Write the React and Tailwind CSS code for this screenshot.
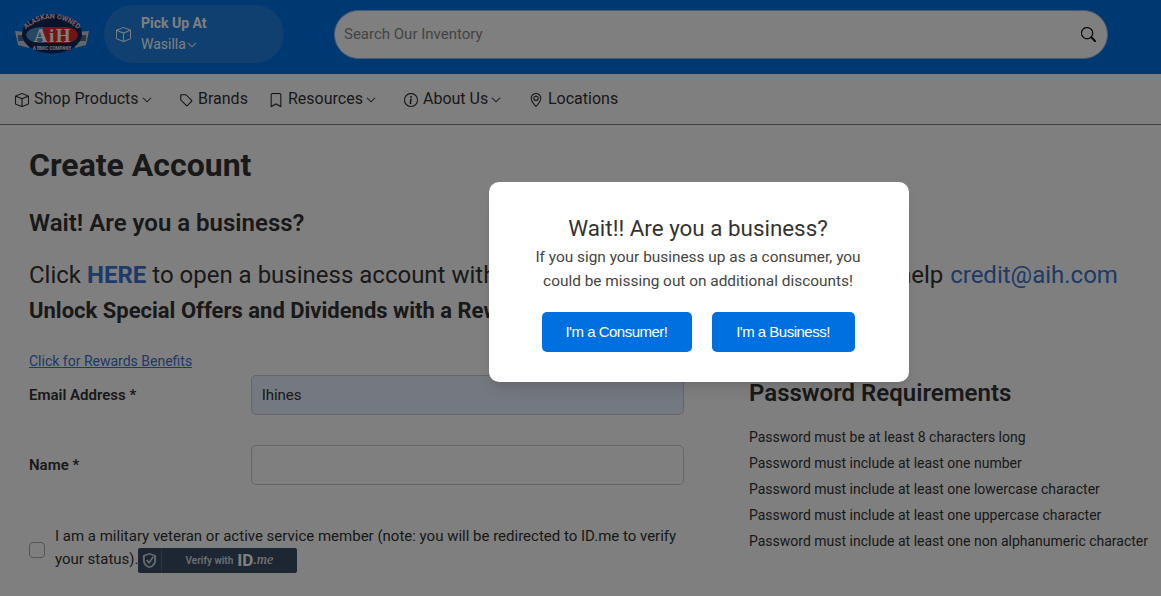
import { BsBox, BsBookmark, BsInfoCircle, BsGeoAlt, BsChevronDown, BsSearch } from "react-icons/bs";

const Logo = () => (
  <svg width="74" height="40" viewBox="0 0 74 40" className="shrink-0">
    <path d="M0 17 L14 18 L14 34 L3 31 Z" fill="#c3cbd8" />
    <path d="M74 17 L60 18 L60 34 L71 31 Z" fill="#c3cbd8" />
    <rect x="3" y="21" width="6" height="6" fill="#5b6b8a" />
    <rect x="65" y="21" width="6" height="6" fill="#5b6b8a" />
    <ellipse cx="37" cy="20" rx="30" ry="19.5" fill="#14265c" />
    <path d="M11 21 C12 15 20 13 28 13 L28 29 C20 29 12 27 11 21 Z" fill="#4a90c8" />
    <path d="M28 13 L50 13 C56 13 62 15 63 21 C62 27 56 29 50 29 L28 29 Z" fill="#e0282f" />
    <text x="38" y="27.5" textAnchor="middle" fontFamily="'Liberation Serif', serif" fontWeight="700" fontSize="19" fill="#fff" letterSpacing="1.5">AiH</text>
    <path id="arcTop" d="M11 15 Q37 -6 63 15" fill="none" />
    <text fontFamily="Roboto, sans-serif" fontWeight="700" fontSize="7" fill="#f3c9d0">
      <textPath href="#arcTop" startOffset="50%" textAnchor="middle">ALASKAN OWNED</textPath>
    </text>
    <text x="37" y="35.5" textAnchor="middle" fontFamily="Roboto, sans-serif" fontWeight="700" fontSize="4.6" fill="#e5e7eb">A BMIC COMPANY</text>
  </svg>
);

const PlainTag = ({ size, className }) => (
  <svg width={size} height={size} viewBox="0 0 16 16" fill="none" stroke="currentColor" strokeWidth="1.2" strokeLinejoin="round" className={className}>
    <path d="M2 2.5 C2 2.2 2.2 2 2.5 2 H8 L14.5 8.5 C14.8 8.8 14.8 9.2 14.5 9.5 L9.5 14.5 C9.2 14.8 8.8 14.8 8.5 14.5 L2 8 Z" />
  </svg>
);

const NavItem = ({ icon: Icon, label, caret, className }) => (
  <a className={`flex items-center text-[16px] text-[#333] ${className}`}>
    <Icon size={14} strokeWidth={0.2} className="ml-[1px] mr-[5px] mt-[2px] text-[#222]" />
    <span>{label}</span>
    {caret && <BsChevronDown size={10} strokeWidth={0.8} className="ml-[3px] mt-[2px]" />}
  </a>
);

const Requirement = ({ children }) => <li className="h-[26px] leading-[26px]">{children}</li>;

const App = () => {
  return (
    <div className="relative h-[596px] w-[1161px] overflow-hidden bg-white font-['Roboto',sans-serif] text-[#333]">
      <header className="flex h-[74px] items-center bg-[#0072e4] pb-[6px] pl-[15px]">
        <Logo />
        <div className="ml-[15px] flex h-[58px] w-[180px] items-center rounded-full bg-[#2080e0] pl-[12px] text-white">
          <BsBox size={15} />
          <div className="ml-[10px] text-[14px] leading-[21px]">
            <div className="font-bold">Pick Up At</div>
            <div className="flex items-center">
              Wasilla
              <BsChevronDown size={10} strokeWidth={0.8} className="ml-[1px]" />
            </div>
          </div>
        </div>
        <div className="ml-[50px] flex h-[49px] w-[774px] items-center rounded-full border border-[#8fb8e6] bg-white pl-[9px] pr-[11px]">
          <span className="flex-1 text-[15px] text-[#888]">Search Our Inventory</span>
          <BsSearch size={15} strokeWidth={0.2} className="text-black" />
        </div>
      </header>

      <nav className="flex h-[51px] items-center border-b border-[#808080] pl-[14px]">
        <NavItem icon={BsBox} label="Shop Products" caret className="w-[164px]" />
        <NavItem icon={PlainTag} label="Brands" className="w-[90px]" />
        <NavItem icon={BsBookmark} label="Resources" caret className="w-[135px]" />
        <NavItem icon={BsInfoCircle} label="About Us" caret className="w-[125px]" />
        <NavItem icon={BsGeoAlt} label="Locations" />
      </nav>

      <main className="pl-[29px]">
        <h1 className="mt-[20px] text-[32px] font-bold leading-[40px]">Create Account</h1>
        <h2 className="mt-[22px] text-[24px] font-semibold leading-[32px]">Wait! Are you a business?</h2>
        <p className="mt-[20px] whitespace-nowrap text-[24px] leading-[32px]">
          Click <a className="font-bold text-[#3a74d0]">HERE</a> to open a business account with us today. Contact our credit team for help{" "}
          <a className="ml-[1px] text-[#3a74d0]">credit@aih.com</a>
        </p>
        <p className="mt-[4px] text-[22px] font-bold leading-[32px]">Unlock Special Offers and Dividends with a Rewards Account</p>
        <a className="mt-[24px] block text-[14px] leading-[20px] text-[#3a74d0] underline">Click for Rewards Benefits</a>

        <div className="flex">
          <div className="w-[655px]">
            <div className="mt-[4px] flex items-center">
              <label className="w-[222px] text-[15px] font-semibold">Email Address *</label>
              <div className="flex h-[40px] w-[433px] items-center rounded-[5px] border border-[#ccc] bg-[#e8f0fe] pl-[10px] text-[15px]">lhines</div>
            </div>
            <div className="mt-[30px] flex items-center">
              <label className="w-[222px] text-[15px] font-semibold">Name *</label>
              <div className="h-[40px] w-[433px] rounded-[5px] border border-[#ccc] bg-white" />
            </div>
            <div className="mt-[40px] flex items-center">
              <div className="mr-[10px] mt-[3px] h-[16px] w-[16px] shrink-0 rounded-[4px] border border-[#aaa]" />
              <p className="w-[630px] text-[15px] leading-[23px]">
                I am a military veteran or active service member (note: you will be redirected to ID.me to verify your status).
                <span className="-my-[4px] ml-[-1px] inline-flex h-[25px] w-[159px] items-center rounded-[2px] bg-[#3a4f66] align-middle">
                  <span className="flex h-full w-[24px] items-center justify-center border-r border-[#56687c]">
                    <svg width="15" height="17" viewBox="0 0 16 18">
                      <path d="M8 1 L15 3.5 V9 C15 13 12 16 8 17 C4 16 1 13 1 9 V3.5 Z" fill="#cfd6de" />
                      <path d="M3 4.5 L8 2.6 L13 4.5 V9 C13 12 11 14.2 8 15.2 C5 14.2 3 12 3 9 Z" fill="#3a4f66" />
                      <path d="M5 8.5 L7.5 11.5 L12 5" fill="none" stroke="#e5e7eb" strokeWidth="1.6" />
                    </svg>
                  </span>
                  <span className="ml-[24px] whitespace-nowrap text-[10px] font-semibold text-[#d8dde3]">Verify with</span>
                  <span className="ml-[4px] text-[17px] font-bold leading-none text-white">ID</span>
                  <span className="font-['Liberation_Serif',serif] text-[14px] italic leading-none text-white">.me</span>
                </span>
              </p>
            </div>
          </div>
          <div className="ml-[65px]">
            <h3 className="mt-[6px] text-[24px] font-semibold leading-[32px]">Password Requirements</h3>
            <ul className="mt-[15px] whitespace-nowrap text-[14px]">
              <Requirement>Password must be at least 8 characters long</Requirement>
              <Requirement>Password must include at least one number</Requirement>
              <Requirement>Password must include at least one lowercase character</Requirement>
              <Requirement>Password must include at least one uppercase character</Requirement>
              <Requirement>Password must include at least one non alphanumeric character</Requirement>
            </ul>
          </div>
        </div>
      </main>

      <div className="absolute inset-0 flex items-start bg-black/50 pl-[489px] pt-[182px]">
        <div className="flex h-[200px] w-[420px] flex-col items-center rounded-[10px] bg-white pr-[2px] pt-[31px] text-center shadow-lg">
          <h4 className="text-[22.4px] leading-[30px] text-[#333]">Wait!! Are you a business?</h4>
          <p className="mt-[2px] w-[340px] text-[15.4px] leading-[24px] text-[#444]">
            If you sign your business up as a consumer, you could be missing out on additional discounts!
          </p>
          <div className="mt-[19px] flex gap-[20px] font-['Liberation_Sans',sans-serif] text-[15px] tracking-[-0.5px] text-white">
            <button className="h-[40px] w-[150px] rounded-[5px] bg-[#0070e0]">I'm a Consumer!</button>
            <button className="h-[40px] w-[143px] rounded-[5px] bg-[#0070e0]">I'm a Business!</button>
          </div>
        </div>
      </div>
    </div>
  );
};

export default App;
